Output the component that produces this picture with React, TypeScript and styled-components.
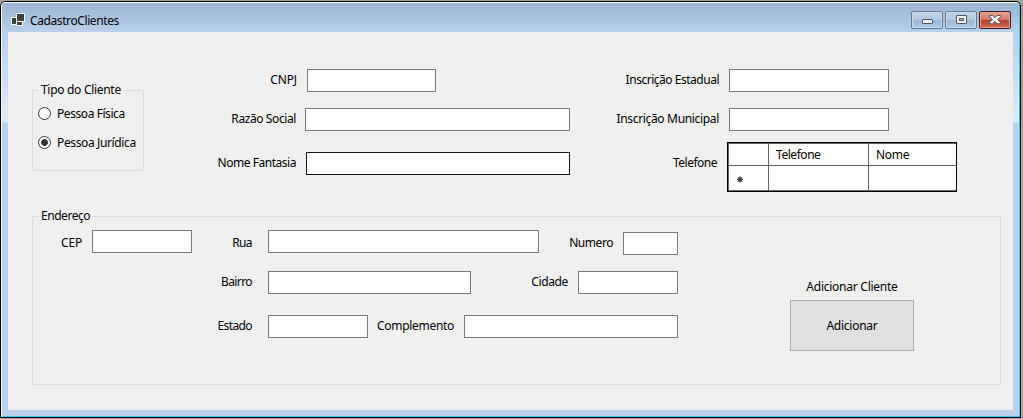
import React from 'react';
import styled, { createGlobalStyle } from 'styled-components';

const GlobalStyle = createGlobalStyle`
  * { box-sizing: border-box; }
  body {
    margin: 0;
    background: #a0a0a0;
    font-family: "Noto Sans", "Open Sans", sans-serif;
    font-size: 12px;
    color: #000;
    overflow: hidden;
  }
`;

const Desktop = styled.div`
  width: 1023px;
  height: 419px;
  padding: 1px 2px 1px 0;
  background: #a0a0a0;
`;

const WindowFrame = styled.div`
  display: flex;
  flex-direction: column;
  height: 417px;
  border: 1px solid #000;
  border-radius: 5px 5px 0 0;
  background: linear-gradient(#99b4d1 0, #b9d1ea 30px, #b9d1ea 34px, #dfebf7 120px, #b9d1ea 121px);
  box-shadow: inset 1px 0 #fff, inset 0 1px #fff, inset -1px -1px #33c8e8;
`;

const TitleBar = styled.header`
  display: flex;
  align-items: flex-start;
  height: 30px;
  padding: 9px 9px 0 10px;
`;

const Title = styled.span`
  flex: 1;
  margin-left: 5px;
  line-height: 20px;
  letter-spacing: -0.4px;
`;

const Controls = styled.div`
  display: flex;
  gap: 2px;
`;

const ControlButton = styled.button<{ $close?: boolean }>`
  display: flex;
  align-items: center;
  justify-content: center;
  width: 32px;
  height: 18px;
  padding: 0;
  border: 1px solid ${p => (p.$close ? '#43141d' : '#66778f')};
  border-radius: 2px;
  box-shadow: inset 0 0 0 1px ${p => (p.$close ? '#e2a497' : '#c8dcf0')};
  background: ${p =>
    p.$close
      ? 'linear-gradient(#e3a294 0, #d2796a 47%, #b83c25 48%, #cf6a55 100%)'
      : 'linear-gradient(#bfd3e8 0, #b2c9e0 47%, #98b4d0 48%, #b0cbe6 100%)'};
`;

const Client = styled.main`
  flex: 1;
  margin: 0 7px 7px 7px;
  background: #f0f0f0;
`;

const TopSection = styled.section`
  display: flex;
  height: 176px;
  padding-left: 24px;
`;

const Group = styled.fieldset<{ $w: number; $h: number }>`
  width: ${p => p.$w}px;
  height: ${p => p.$h}px;
  min-width: 0;
  margin: 0;
  padding: 0;
  border: 1px solid #dcdcdc;
`;

const Legend = styled.legend<{ $w: number; $ls?: number }>`
  width: ${p => p.$w}px;
  height: 16px;
  margin-left: 6px;
  padding: 0 0 0 2px;
  line-height: 15px;
  white-space: nowrap;
  letter-spacing: ${p => p.$ls ?? 0}px;
`;

const ClientType = styled.div`
  padding-top: 50px;
`;

const RadioRow = styled.label<{ $ls: number }>`
  display: flex;
  align-items: center;
  gap: 6px;
  height: 29px;
  padding-left: 5px;
  white-space: nowrap;
  letter-spacing: ${p => p.$ls}px;
  &:first-of-type { margin-top: 1px; }
  span { line-height: 17px; }
`;

const RadioCircle = styled.i<{ $on?: boolean }>`
  flex: none;
  width: 13px;
  height: 13px;
  border: 1px solid #333;
  border-radius: 50%;
  background: ${p => (p.$on ? 'radial-gradient(circle, #333 3px, #fff 3.8px)' : '#fff')};
`;

const Column = styled.div<{ $w: number }>`
  display: flex;
  flex-direction: column;
  width: ${p => p.$w}px;
  padding-top: 37px;
`;

const Field = styled.div<{ $mt?: number }>`
  display: flex;
  align-items: flex-start;
  margin-top: ${p => p.$mt ?? 0}px;
`;

const Label = styled.label<{ $w: number; $gap: number; $ls?: number }>`
  flex: none;
  width: ${p => p.$w}px;
  padding-right: ${p => p.$gap}px;
  line-height: 21px;
  text-align: right;
  white-space: nowrap;
  letter-spacing: ${p => p.$ls ?? 0}px;
`;

const Input = styled.input<{ $w: number; $active?: boolean; $raise?: number }>`
  flex: none;
  width: ${p => p.$w}px;
  height: 23px;
  margin: ${p => -(p.$raise ?? 0)}px 0 0;
  padding: 2px 4px;
  border: 1px solid ${p => (p.$active ? '#171717' : '#7a7a7a')};
  border-radius: 0;
  background: #fff;
  font: inherit;
  outline: none;
`;

const PhoneGrid = styled.div`
  display: grid;
  grid-template-columns: 39px 99px 87px;
  grid-template-rows: 21px 24px;
  gap: 1px;
  width: 230px;
  height: 50px;
  margin-top: -10px;
  padding: 1px 0 1px 1px;
  border: 1px solid #000;
  background: #646464;
`;

const Cell = styled.div<{ $ls?: number }>`
  display: flex;
  align-items: center;
  padding-left: 7px;
  background: #fff;
  line-height: 21px;
  letter-spacing: ${p => p.$ls ?? 0}px;
`;

const AddressWrap = styled.section`
  padding-left: 24px;
`;

const AddressBody = styled.div`
  display: flex;
`;

const AddressFields = styled.div`
  width: 645px;
  padding-top: 8px;
`;

const AddressRow = styled.div<{ $h: number }>`
  display: flex;
  height: ${p => p.$h}px;
`;

const AddPanel = styled.div`
  display: flex;
  flex-direction: column;
  align-items: center;
  width: 124px;
  margin-left: 112px;
  padding-top: 54px;
`;

const AddCaption = styled.span`
  line-height: 18px;
  margin-bottom: 4px;
  white-space: nowrap;
  letter-spacing: -0.25px;
`;

const AddButton = styled.button`
  width: 124px;
  height: 51px;
  padding: 0;
  border: 1px solid #adadad;
  background: #e1e1e1;
  color: #000;
  font: inherit;
  letter-spacing: -0.25px;
`;

const TitleIcon = styled.svg`
  flex: none;
  margin-top: 2px;
`;

const RowMarker = styled.svg`
  margin-top: 3px;
`;

function AppIcon() {
  return (
    <TitleIcon width="14" height="13" viewBox="0 0 14 13" shapeRendering="crispEdges">
      <path d="M5 0h9v9h-2v4H5v-1H0V4h5z" fill="#fff" />
      <path d="M6 1h7v7H6zM1 5h4v6H1zM6 9h5v3H6z" fill="#404040" />
    </TitleIcon>
  );
}

function MinimizeIcon() {
  return (
    <svg width="12" height="10" viewBox="0 0 12 10">
      <rect x="1.5" y="4.5" width="10" height="4" rx="0.5" fill="#f4f4f4" stroke="#535666" />
    </svg>
  );
}

function MaximizeIcon() {
  return (
    <svg width="12" height="10" viewBox="0 0 12 10">
      <rect x="1.5" y="0.5" width="10" height="8" rx="0.5" fill="#f4f4f4" stroke="#535666" />
      <rect x="4.5" y="3.5" width="4" height="2" fill="#9bb6d2" stroke="#535666" />
    </svg>
  );
}

function CloseIcon() {
  return (
    <svg width="12" height="10" viewBox="0 0 12 10">
      <path
        d="M.5.5h3.3L6 2.7 8.2.5h3.3v1.3L8.6 4.6l2.9 2.8v1.3H8.2L6 6.5 3.8 8.7H.5V7.4l2.9-2.8L.5 1.8z"
        fill="#f4f4f4"
        stroke="#535666"
      />
    </svg>
  );
}

function NewRowIcon() {
  return (
    <RowMarker width="8" height="7" viewBox="0 0 8 7">
      <path d="M4 .5v6M1 3.5h6M1.8 1.3l4.4 4.4M6.2 1.3L1.8 5.7" stroke="#404040" strokeWidth="1.2" />
      <circle cx="4" cy="3.5" r="2" fill="#404040" />
    </RowMarker>
  );
}

export default function App() {
  return (
    <Desktop>
      <GlobalStyle />
      <WindowFrame>
        <TitleBar>
          <AppIcon />
          <Title>CadastroClientes</Title>
          <Controls>
            <ControlButton aria-label="Minimizar"><MinimizeIcon /></ControlButton>
            <ControlButton aria-label="Maximizar"><MaximizeIcon /></ControlButton>
            <ControlButton aria-label="Fechar" $close><CloseIcon /></ControlButton>
          </Controls>
        </TitleBar>
        <Client>
          <TopSection>
            <ClientType>
              <Group $w={112} $h={89}>
                <Legend $w={84} $ls={-0.3}>Tipo do Cliente</Legend>
                <RadioRow $ls={-0.43}><RadioCircle /><span>Pessoa Física</span></RadioRow>
                <RadioRow $ls={-0.37}><RadioCircle $on /><span>Pessoa Jurídica</span></RadioRow>
              </Group>
            </ClientType>
            <Column $w={426}>
              <Field>
                <Label $w={163} $gap={10} $ls={-0.1}>CNPJ</Label>
                <Input $w={129} />
              </Field>
              <Field $mt={16}>
                <Label $w={161} $gap={9} $ls={-0.4}>Razão Social</Label>
                <Input $w={265} />
              </Field>
              <Field $mt={21}>
                <Label $w={162} $gap={10} $ls={-0.47}>Nome Fantasia</Label>
                <Input $w={264} $active />
              </Field>
            </Column>
            <Column $w={387}>
              <Field>
                <Label $w={159} $gap={10} $ls={-0.48}>Inscrição Estadual</Label>
                <Input $w={160} />
              </Field>
              <Field $mt={16}>
                <Label $w={159} $gap={10} $ls={-0.33}>Inscrição Municipal</Label>
                <Input $w={160} />
              </Field>
              <Field $mt={21}>
                <Label $w={157} $gap={10} $ls={-0.5}>Telefone</Label>
                <PhoneGrid>
                  <Cell />
                  <Cell $ls={-0.45}>Telefone</Cell>
                  <Cell $ls={-0.3}>Nome</Cell>
                  <Cell><NewRowIcon /></Cell>
                  <Cell />
                  <Cell />
                </PhoneGrid>
              </Field>
            </Column>
          </TopSection>
          <AddressWrap>
            <Group $w={969} $h={177}>
              <Legend $w={53} $ls={-0.45}>Endereço</Legend>
              <AddressBody>
                <AddressFields>
                  <AddressRow $h={39}>
                    <Label $w={59} $gap={10} $ls={-0.2}>CEP</Label>
                    <Input $w={100} $raise={2} />
                    <Label $w={76} $gap={16} $ls={-0.6}>Rua</Label>
                    <Input $w={271} $raise={2} />
                    <Label $w={84} $gap={10} $ls={-0.45}>Numero</Label>
                    <Input $w={55} />
                  </AddressRow>
                  <AddressRow $h={44}>
                    <Label $w={235} $gap={16} $ls={-0.6}>Bairro</Label>
                    <Input $w={203} />
                    <Label $w={107} $gap={10} $ls={-0.35}>Cidade</Label>
                    <Input $w={100} />
                  </AddressRow>
                  <AddressRow $h={23}>
                    <Label $w={235} $gap={16} $ls={-0.6}>Estado</Label>
                    <Input $w={100} />
                    <Label $w={96} $gap={10} $ls={-0.3}>Complemento</Label>
                    <Input $w={214} />
                  </AddressRow>
                </AddressFields>
                <AddPanel>
                  <AddCaption>Adicionar Cliente</AddCaption>
                  <AddButton>Adicionar</AddButton>
                </AddPanel>
              </AddressBody>
            </Group>
          </AddressWrap>
        </Client>
      </WindowFrame>
    </Desktop>
  );
}
